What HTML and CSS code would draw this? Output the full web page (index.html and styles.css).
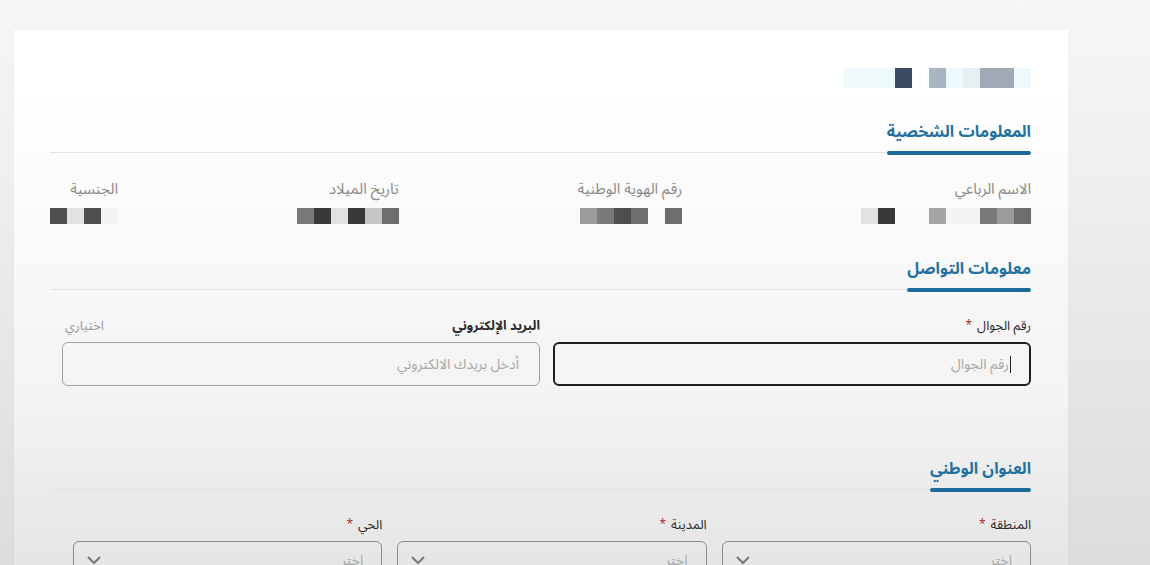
FILE: index.html
```html
<!DOCTYPE html>
<html lang="ar" dir="rtl">
<head>
  <meta charset="UTF-8" />
  <meta name="viewport" content="width=device-width, initial-scale=1.0"/>
  <title>البيانات الشخصية</title>
  <link rel="stylesheet" href="styles.css">
</head>
<body>
  <div class="page">
    <div class="card">
      <!-- masked user name -->
      <div class="masked masked-head">
        <span class="sq h1"></span><span class="sq h3"></span><span class="sq h3"></span>
        <span class="sq h2"></span><span class="sq h1"></span><span class="sq h4"></span>
        <span class="sq"></span><span class="sq h5"></span><span class="sq h1"></span>
        <span class="sq h6"></span><span class="sq h6"></span>
      </div>

      <div class="section-head">
        <h2>المعلومات الشخصية</h2>
        <span class="rule"></span>
      </div>

      <div class="info-row">
        <div class="info-item">
          <div class="info-label">الاسم الرباعي</div>
          <div class="masked">
            <span class="sq s7"></span><span class="sq s5"></span><span class="sq s6"></span>
            <span class="sq s1"></span><span class="sq s1"></span><span class="sq s4"></span>
            <span class="sq"></span><span class="sq"></span><span class="sq s9"></span>
            <span class="sq s2"></span>
          </div>
        </div>
        <div class="info-item">
          <div class="info-label">رقم الهوية الوطنية</div>
          <div class="masked">
            <span class="sq s7"></span><span class="sq"></span><span class="sq s7"></span>
            <span class="sq s8"></span><span class="sq s6"></span><span class="sq s5"></span>
          </div>
        </div>
        <div class="info-item">
          <div class="info-label">تاريخ الميلاد</div>
          <div class="masked">
            <span class="sq s7"></span><span class="sq s3"></span><span class="sq s9"></span>
            <span class="sq s2"></span><span class="sq s9"></span><span class="sq s6"></span>
          </div>
        </div>
        <div class="info-item">
          <div class="info-label">الجنسية</div>
          <div class="masked">
            <span class="sq s1"></span><span class="sq s8"></span><span class="sq s2"></span>
            <span class="sq s8"></span>
          </div>
        </div>
      </div>

      <div class="section-head contact-head">
        <h2>معلومات التواصل</h2>
        <span class="rule"></span>
      </div>

      <div class="contact-grid">
        <div class="field">
          <label class="field-label">رقم الجوال <span class="req">*</span></label>
          <div class="input-wrap">
            <input class="input focused" type="text" placeholder="رقم الجوال">
            <span class="caret"></span>
          </div>
        </div>
        <div class="field">
          <label class="field-label strong">
            <span>البريد الإلكتروني</span>
            <span class="optional">اختياري</span>
          </label>
          <input class="input" type="text" placeholder="أدخل بريدك الالكتروني">
        </div>
      </div>

      <div class="section-head address-head">
        <h2>العنوان الوطني</h2>
        <span class="rule"></span>
      </div>

      <div class="address-grid">
        <div class="field">
          <label class="field-label">المنطقة <span class="req">*</span></label>
          <div class="select">
            <span>اختر</span>
            <svg width="14" height="9" viewBox="0 0 14 9"><path d="M1 1l6 6 6-6" fill="none" stroke="#777" stroke-width="2"/></svg>
          </div>
        </div>
        <div class="field">
          <label class="field-label">المدينة <span class="req">*</span></label>
          <div class="select">
            <span>اختر</span>
            <svg width="14" height="9" viewBox="0 0 14 9"><path d="M1 1l6 6 6-6" fill="none" stroke="#777" stroke-width="2"/></svg>
          </div>
        </div>
        <div class="field">
          <label class="field-label">الحي <span class="req">*</span></label>
          <div class="select">
            <span>اختر</span>
            <svg width="14" height="9" viewBox="0 0 14 9"><path d="M1 1l6 6 6-6" fill="none" stroke="#777" stroke-width="2"/></svg>
          </div>
        </div>
      </div>
    </div>
  </div>
</body>
</html>
```

FILE: styles.css
```css
* {
  box-sizing: border-box;
}

html, body {
  margin: 0;
}

body {
  font-family: "Noto Sans Arabic", "DejaVu Sans", sans-serif;
  background: linear-gradient(#f6f6f6 0, #eeeeee 200px, #dcdcdc 565px);
  height: 565px;
  overflow: hidden;
}

.page {
  padding: 30px 82px 0 14px;
}

.card {
  height: 535px;
  padding: 38px 37px 0 36px;
  background: linear-gradient(#fff 0, #fff 60px, #f3f3f3 370px, #e5e5e5 535px);
  box-shadow: 0 0 4px rgba(0, 0, 0, 0.03);
}

/* masked squares */
.masked {
  display: flex;
  height: 16px;
}

.sq {
  width: 17px;
  height: 100%;
}

.masked-head {
  height: 20px;
}

.s1 { background: #f1f3f4; }
.s2 { background: #e2e2e4; }
.s3 { background: #c5c5c8; }
.s4 { background: #a5a5a7; }
.s5 { background: #9c9c9c; }
.s6 { background: #7a7a7a; }
.s7 { background: #6d6d70; }
.s8 { background: #4e4e50; }
.s9 { background: #38393b; }

.h1 { background: #eef9fb; }
.h2 { background: #e8eef2; }
.h3 { background: #a0a9b4; }
.h4 { background: #a9b4c2; }
.h5 { background: #3b4a63; }
.h6 { background: #f0fafc; }

/* section titles */
.section-head {
  display: flex;
  align-items: flex-end;
  margin-top: 33px;
}

.section-head h2 {
  margin: 0;
  font-size: 16px;
  line-height: 22px;
  font-weight: bold;
  color: #2471a0;
}

.section-head h2::after {
  content: "";
  display: block;
  height: 4px;
  margin-top: 8px;
  border-radius: 2px;
  background: #1d6b98;
}

.section-head .rule {
  flex: 1;
  height: 1px;
  margin-bottom: 2px;
  background: #e3e3e3;
}

.contact-head {
  margin-top: 34px;
}

.address-head {
  margin-top: 72px;
}

/* personal info */
.info-row {
  display: flex;
  justify-content: space-between;
  margin-top: 24px;
}

.info-label {
  font-size: 15px;
  line-height: 20px;
  color: #8a8a8a;
  margin-bottom: 9px;
}

/* form fields */
.contact-grid {
  display: grid;
  grid-template-columns: 1fr 1fr;
  gap: 13px;
  padding-left: 12px;
  margin-top: 24px;
}

.address-grid {
  display: grid;
  grid-template-columns: repeat(3, 1fr);
  gap: 15px;
  padding-left: 23px;
  margin-top: 23px;
}

.field-label {
  display: flex;
  justify-content: space-between;
  font-size: 13px;
  line-height: 20px;
  color: #2a2a2a;
  margin-bottom: 6px;
}

.field-label .req {
  color: #a8303a;
  font-size: 12px;
  margin-right: 5px;
  margin-left: auto;
}

.field-label.strong {
  font-weight: bold;
}

.optional {
  font-weight: normal;
  color: #999;
  padding-left: 3px;
}

.input-wrap {
  position: relative;
}

.input {
  display: block;
  width: 100%;
  height: 44px;
  padding: 0 20px;
  border: 1.5px solid #a0a0a0;
  border-radius: 6px;
  background: transparent;
  font-family: inherit;
  font-size: 14px;
  outline: none;
}

.input::placeholder {
  color: #a8a8a8;
}

.input.focused {
  border: 2px solid #1f1f1f;
}

.caret {
  position: absolute;
  right: 20px;
  top: 14px;
  width: 1px;
  height: 17px;
  background: #222;
}

.select {
  display: flex;
  justify-content: space-between;
  align-items: center;
  height: 44px;
  padding: 0 18px 6px 13px;
  border: 1.5px solid #8c8c8c;
  border-radius: 6px;
  font-size: 14px;
  color: #a8a8a8;
}
```
